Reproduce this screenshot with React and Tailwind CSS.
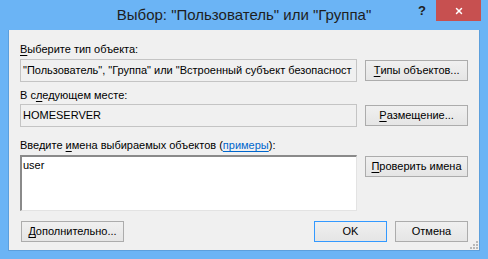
import { X } from 'lucide-react';

const font = { fontFamily: '"Liberation Sans", Arial, sans-serif' };

function Btn({ children, w = 'w-[103px]', primary = false }) {
    return (
        <div
            className={`${w} h-[21px] flex items-center justify-center text-[11px] text-black bg-gradient-to-b from-[#f0f0f0] to-[#e5e5e5] border whitespace-nowrap ${primary ? 'border-[#3399ff]' : 'border-[#acacac]'}`}
        >
            {children}
        </div>
    );
}

function U({ children }) {
    return <span className="underline underline-offset-2">{children}</span>;
}

export default function App() {
    return (
        <div className="w-[488px] h-[259px] bg-[#6bb4f5] flex flex-col" style={font}>
            {/* title bar */}
            <div className="relative h-[30px] flex items-center justify-center">
                <span className="text-[15px] text-[#1e1e1e]">Выбор: "Пользователь" или "Группа"</span>
                <div className="absolute right-[7px] top-0 flex items-start">
                    <span className="w-[28px] h-[21px] flex items-center justify-center text-[13px] font-bold text-[#202020]">?</span>
                    <div className="w-[45px] h-[21px] bg-[#c75050] flex items-center justify-center">
                        <X className="w-[10px] h-[10px] text-white" strokeWidth={3.5} />
                    </div>
                </div>
            </div>

            {/* client area */}
            <div className="mx-[8px] h-[221px] bg-[#f0f0f0] border border-[#5c9fdc] border-t-0 flex flex-col pl-[11px] pr-[11px] pt-[11px] relative text-[11px] text-black">
                <div className="h-[16px] leading-[16px]"><U>В</U>ыберите тип объекта:</div>
                <div className="mt-[2px] flex items-center gap-[8px]">
                    <div className="w-[338px] h-[23px] border border-[#c4c4c4] bg-[#f0f0f0] flex items-center pl-[2px] overflow-hidden whitespace-nowrap">
                        "Пользователь", "Группа" или "Встроенный субъект безопасност
                    </div>
                    <Btn><U>Т</U>ипы объектов...</Btn>
                </div>

                <div className="mt-[5px] h-[16px] leading-[16px]">В с<U>л</U>едующем месте:</div>
                <div className="mt-[1px] flex items-center gap-[8px]">
                    <div className="w-[338px] h-[23px] border border-[#c4c4c4] bg-[#f0f0f0] flex items-center pl-[2px]">
                        HOMESERVER
                    </div>
                    <Btn><U>Р</U>азмещение...</Btn>
                </div>

                <div className="mt-[10px] h-[16px] leading-[16px]">
                    Введите <U>и</U>мена выбираемых объектов (<span className="text-[#0066cc] underline underline-offset-2">примеры</span>):
                </div>
                <div className="mt-[2px] flex items-start gap-[8px]">
                    <div className="w-[338px] h-[56px] bg-white border-t-2 border-l-2 border-t-[#8a8a8a] border-l-[#8a8a8a] border-r border-b border-r-[#e3e3e3] border-b-[#e3e3e3] px-[1px] leading-[16px]">
                        user
                    </div>
                    <div className="mt-[1px]">
                        <Btn><U>П</U>роверить имена</Btn>
                    </div>
                </div>

                <div className="mt-[10px] flex items-center">
                    <div className="ml-[1px]">
                        <Btn><U>Д</U>ополнительно...</Btn>
                    </div>
                    <div className="ml-auto flex gap-[8px]">
                        <Btn w="w-[73px]" primary>OK</Btn>
                        <Btn w="w-[73px]">Отмена</Btn>
                    </div>
                </div>

                {/* size grip */}
                <svg className="absolute right-[1px] bottom-[1px]" width="8" height="8" viewBox="0 0 8 8">
                    {[[6, 0], [3, 3], [6, 3], [0, 6], [3, 6], [6, 6]].map(([x, y]) => (
                        <rect key={`${x}-${y}`} x={x} y={y} width="2" height="2" fill="#b8b8b8" />
                    ))}
                </svg>
            </div>
        </div>
    );
}
